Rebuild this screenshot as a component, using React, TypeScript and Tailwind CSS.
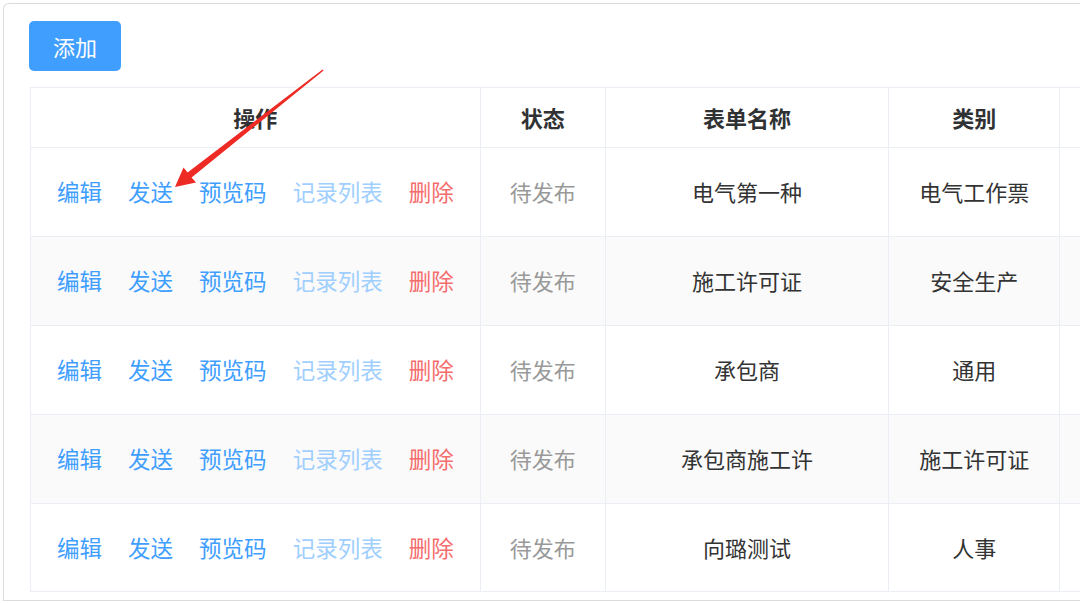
import React from 'react';

const rows = [
  { name: '电气第一种', type: '电气工作票' },
  { name: '施工许可证', type: '安全生产' },
  { name: '承包商', type: '通用' },
  { name: '承包商施工许', type: '施工许可证' },
  { name: '向璐测试', type: '人事' },
];

export default function App() {
  return (
    <div
      className="relative w-[1080px] h-[603px] overflow-hidden bg-white"
      style={{ fontFamily: '"Noto Sans CJK SC", "Noto Sans", sans-serif' }}
    >
      <div className="ml-[3px] mt-[3px] h-[598px] border-t border-l border-b border-[#dcdcdc] rounded-tl-md overflow-hidden">
        <div className="pl-[25px] pt-[17px]">
          <button className="w-[92px] h-[50px] rounded-[5px] bg-[#409eff] text-white text-[22px] leading-none">
            添加
          </button>
        </div>

        <div className="ml-[26px] mt-[16px] w-[1200px]">
          <table className="table-fixed border-collapse text-[22px] border-t border-l border-[#ebeef5]">
            <colgroup>
              <col className="w-[450px]" />
              <col className="w-[125px]" />
              <col className="w-[284px]" />
              <col className="w-[171px]" />
              <col className="w-[170px]" />
            </colgroup>
            <thead>
              <tr className="h-[60px]">
                <th className="border-r border-b border-[#ebeef5] font-bold text-[#303133] text-center">操作</th>
                <th className="border-r border-b border-[#ebeef5] font-bold text-[#303133] text-center">状态</th>
                <th className="border-r border-b border-[#ebeef5] font-bold text-[#303133] text-center">表单名称</th>
                <th className="border-r border-b border-[#ebeef5] font-bold text-[#303133] text-center">类别</th>
                <th className="border-r border-b border-[#ebeef5]"></th>
              </tr>
            </thead>
            <tbody>
              {rows.map((r, i) => (
                <tr key={i} className={i % 2 === 1 ? 'h-[88.9px] bg-[#fafafa]' : 'h-[88.9px] bg-white'}>
                  <td className="border-r border-b border-[#ebeef5]">
                    <div className="flex justify-center gap-[26px] text-[22.5px]">
                      <span className="text-[#409eff]">编辑</span>
                      <span className="text-[#409eff]">发送</span>
                      <span className="text-[#409eff]">预览码</span>
                      <span className="text-[#a0cfff]">记录列表</span>
                      <span className="text-[#f56c6c]">删除</span>
                    </div>
                  </td>
                  <td className="border-r border-b border-[#ebeef5] text-center text-[#999999]">待发布</td>
                  <td className="border-r border-b border-[#ebeef5] text-center text-[#333333]">{r.name}</td>
                  <td className="border-r border-b border-[#ebeef5] text-center text-[#333333]">{r.type}</td>
                  <td className="border-r border-b border-[#ebeef5]"></td>
                </tr>
              ))}
            </tbody>
          </table>
        </div>
      </div>

      {/* red annotation arrow */}
      <svg className="absolute inset-0 pointer-events-none" width="1080" height="603">
        <polygon
          points="175,187 196,182.5 191.6,177.6 323.6,70.4 322.6,69.4 187.6,172.6 183.5,167.5"
          fill="#ee2a24"
        />
      </svg>
    </div>
  );
}
